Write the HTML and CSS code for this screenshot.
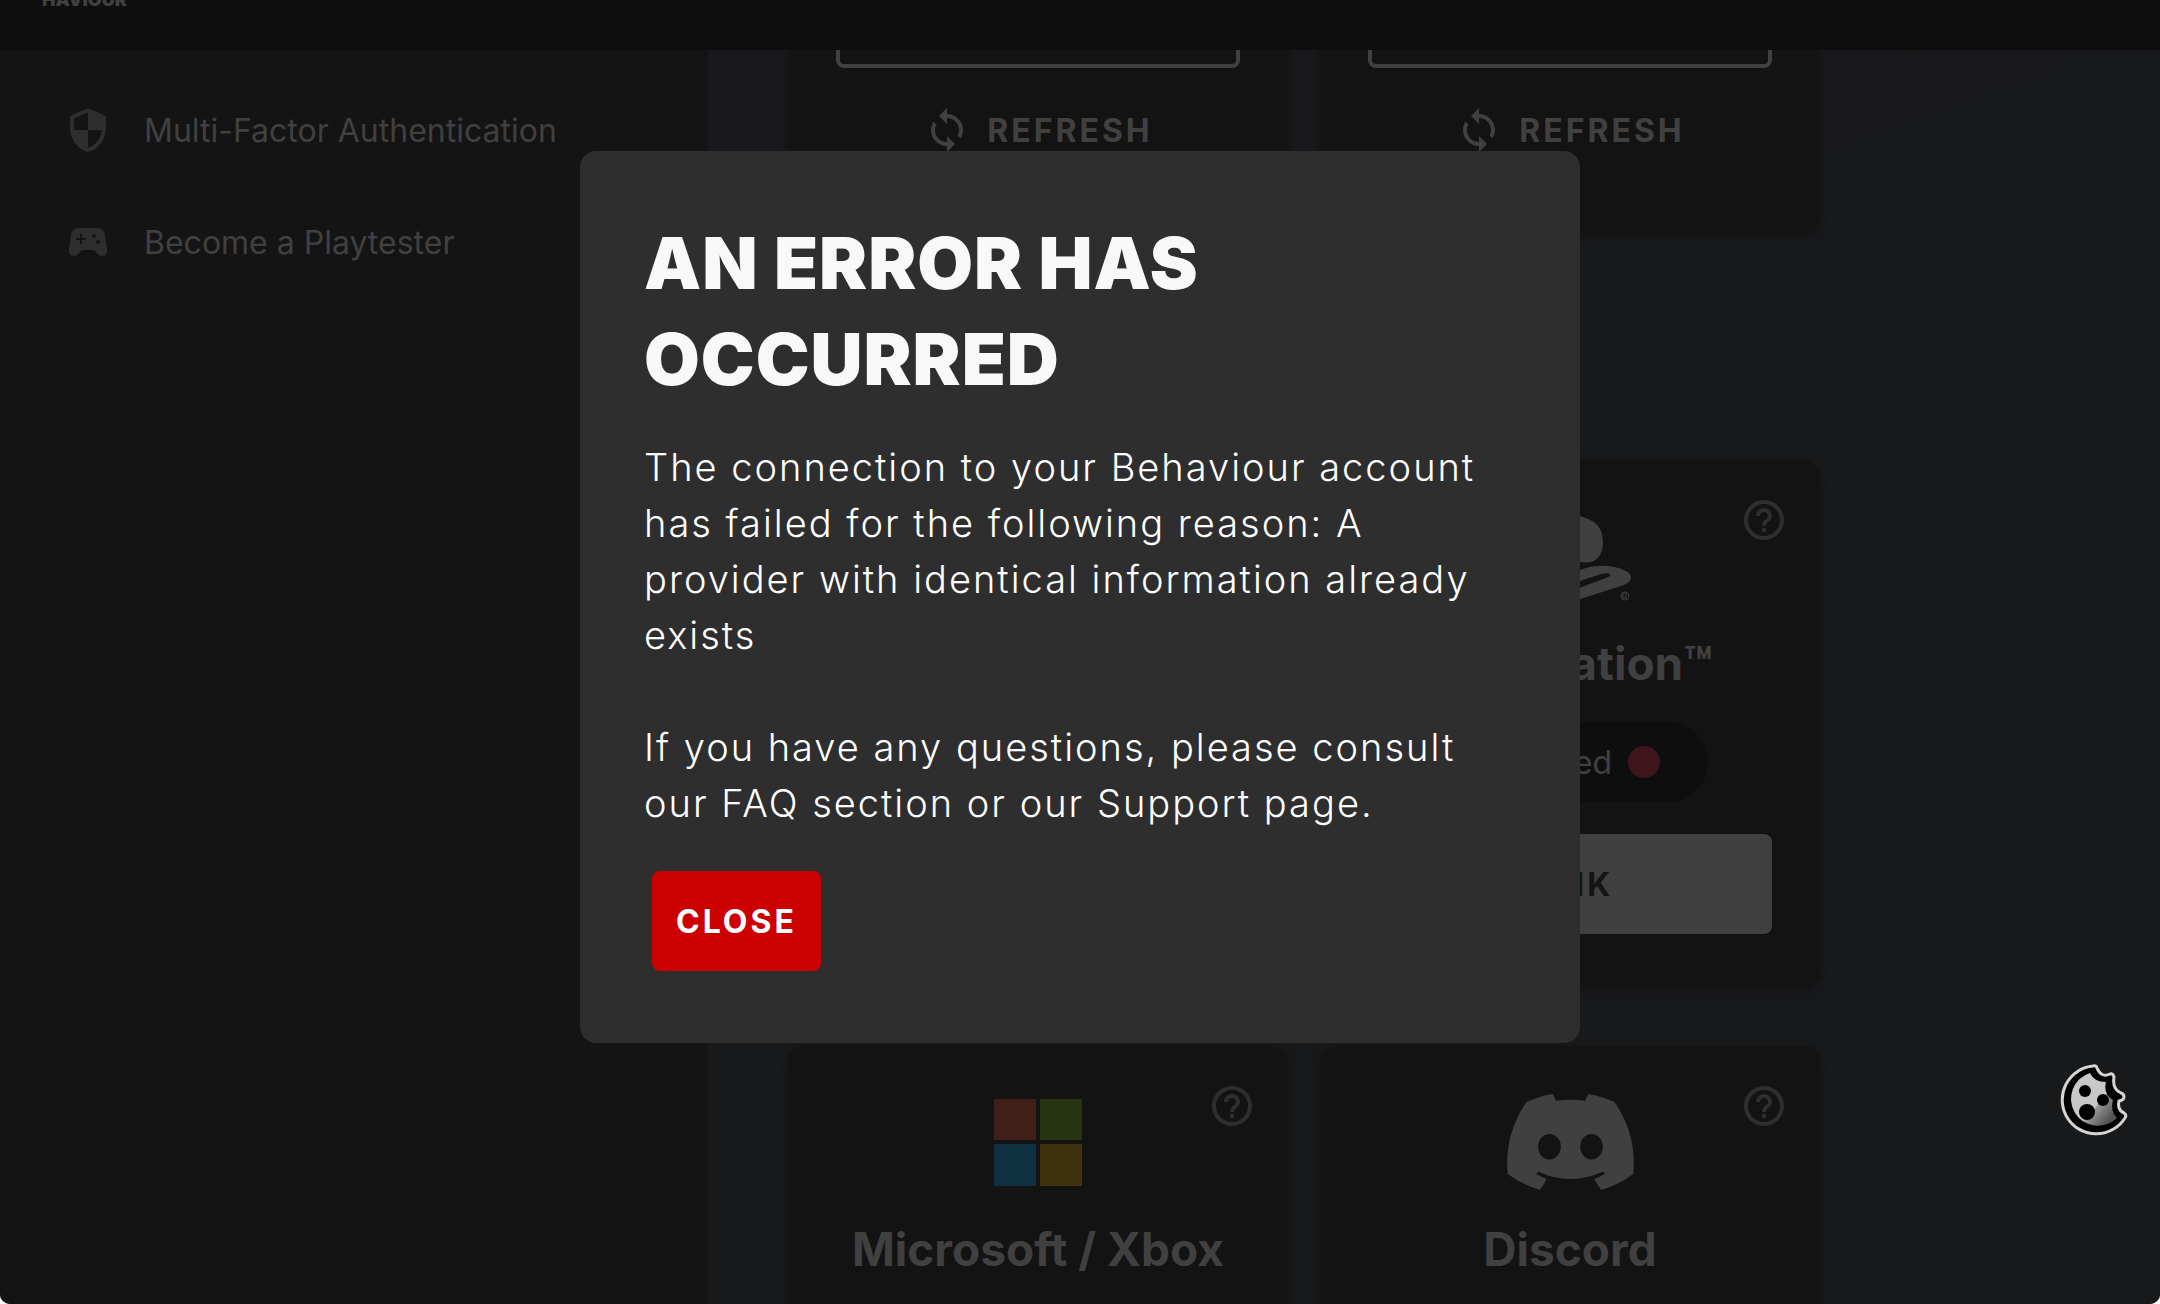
FILE: index.html
```html
<!DOCTYPE html>
<html lang="en">
<head>
<meta charset="utf-8">
<title>Behaviour Account</title>
<meta name="viewport" content="width=device-width, initial-scale=1">
<link rel="stylesheet" href="styles.css">
</head>
<body>
<svg class="sprite" aria-hidden="true">
  <symbol id="sync" viewBox="0 0 24 24"><path d="M12 4V1L8 5l4 4V6c3.31 0 6 2.69 6 6 0 1.01-.25 1.97-.7 2.8l1.46 1.46C19.54 15.03 20 13.57 20 12c0-4.42-3.58-8-8-8zm0 14c-3.31 0-6-2.69-6-6 0-1.01.25-1.97.7-2.8L5.24 7.74C4.46 8.97 4 10.43 4 12c0 4.42 3.58 8 8 8v3l4-4-4-4v3z"/></symbol>
  <symbol id="help" viewBox="0 0 24 24"><path d="M11 18h2v-2h-2v2zm1-16C6.48 2 2 6.48 2 12s4.48 10 10 10 10-4.480 10-10S17.520 2 12 2zm0 18c-4.410 0-8-3.590-8-8s3.590-8 8-8 8 3.590 8 8-3.590 8-8 8zm0-14c-2.210 0-4 1.790-4 4h2c0-1.100.9-2 2-2s2 .9 2 2c0 2-3 1.750-3 5h2c0-2.250 3-2.500 3-5 0-2.210-1.790-4-4-4z"/></symbol>
</svg>
<div class="page">
  <header class="topbar"><a class="brand" href="#">HAVIOUR</a></header>
  <div class="layout">
    <nav class="sidebar" aria-label="Account">
      <a class="nav-link" href="#">
        <svg class="icon" viewBox="0 0 24 24" aria-hidden="true"><path d="M12 1L3 5v6c0 5.550 3.840 10.740 9 12 5.160-1.260 9-6.450 9-12V5l-9-4zm0 10.990h7c-.53 4.120-3.280 7.790-7 8.940V12H5V6.300l7-3.110v8.800z"/></svg>
        Multi-Factor Authentication
      </a>
      <a class="nav-link" href="#">
        <svg class="icon" viewBox="0 0 24 24" aria-hidden="true"><path d="M21.580 16.090l-1.090-7.660C20.210 6.460 18.520 5 16.530 5H7.470C5.480 5 3.790 6.460 3.510 8.430l-1.090 7.660C2.200 17.630 3.390 19 4.940 19c.68 0 1.320-.27 1.800-.75L9 16h6l2.250 2.250c.48.48 1.130.75 1.800.75 1.560 0 2.750-1.370 2.530-2.910zM11 11H9v2H8v-2H6v-1h2V8h1v2h2v1zm4-1c-.55 0-1-.45-1-1s.45-1 1-1 1 .45 1 1-.45 1-1 1zm2 3c-.55 0-1-.45-1-1s.45-1 1-1 1 .45 1 1-.45 1-1 1z"/></svg>
        Become a Playtester
      </a>
    </nav>
    <main class="content">
      <section class="grid grid-linked">
        <article class="card">
          <button class="btn btn-outline" type="button" aria-label="Unlink"></button>
          <button class="btn btn-text" type="button"><svg class="icon" aria-hidden="true"><use href="#sync"/></svg>REFRESH</button>
        </article>
        <article class="card">
          <button class="btn btn-outline" type="button" aria-label="Unlink"></button>
          <button class="btn btn-text" type="button"><svg class="icon" aria-hidden="true"><use href="#sync"/></svg>REFRESH</button>
        </article>
      </section>
      <section class="grid">
        <article class="card card-second">
          <button class="help" type="button" aria-label="Help"><svg class="icon" aria-hidden="true"><use href="#help"/></svg></button>
          <svg class="logo" width="124" height="96" viewBox="0 0 124 96" aria-hidden="true">
            <path d="M43 5v83l18 6V24c0-3 1-4 3-3s4 3 4 7v24c12 6 27 2 27-18C95 18 86 12 71 8 62 6 51 5 43 5z"/>
            <path fill-rule="evenodd" d="M66 64l12-4c16-4 30-2 40 3 7 4 7 10-2 14L66 93V82l32-12c8-3 4-6-5-4L66 75z"/>
            <path d="M40 57L10 68c-8 3-9 9-1 12 10 3 22 4 31 0V71l-11 4c-7 2-10-1-4-3l15-6z"/>
            <circle cx="117" cy="88" r="4" fill="none" stroke="currentColor"/>
            <path d="M115 91v-5h3q2 1 0 3h-2l3 2" fill="none" stroke="currentColor"/>
          </svg>
          <h2 class="card-title">PlayStation™</h2>
          <p class="status">Unlinked<span class="dot"></span></p>
          <button class="btn btn-solid" type="button">LINK</button>
        </article>
        <article class="card">
          <button class="help" type="button" aria-label="Help"><svg class="icon" aria-hidden="true"><use href="#help"/></svg></button>
          <svg class="logo" width="88" height="96" viewBox="0 0 88 96" aria-hidden="true"><path fill="#3f1f17" d="M0 5h42v41H0z"/><path fill="#283411" d="M46 5h42v41H46z"/><path fill="#0f3040" d="M0 50h42v42H0z"/><path fill="#40320f" d="M46 50h42v42H46z"/></svg>
          <h2 class="card-title">Microsoft / Xbox</h2>
        </article>
        <article class="card">
          <button class="help" type="button" aria-label="Help"><svg class="icon" aria-hidden="true"><use href="#help"/></svg></button>
          <svg class="logo" width="127" height="96" viewBox="0 0 127.14 96.36" aria-hidden="true"><path d="M107.700 8.070A105.150 105.150 0 0 0 81.470 0a72.060 72.060 0 0 0-3.360 6.830 97.680 97.680 0 0 0-29.110 0A72.370 72.370 0 0 0 45.640 0a105.890 105.890 0 0 0-26.250 8.090C2.790 32.650-1.710 56.600.54 80.210a105.730 105.730 0 0 0 32.170 16.150 77.700 77.700 0 0 0 6.890-11.110 68.420 68.420 0 0 1-10.850-5.180c.91-.66 1.800-1.340 2.660-2a75.570 75.570 0 0 0 64.320 0c.87.71 1.760 1.390 2.660 2a68.680 68.680 0 0 1-10.870 5.190 77 77 0 0 0 6.890 11.100 105.250 105.250 0 0 0 32.190-16.140c2.640-27.380-4.510-51.110-18.900-72.150zM42.450 65.690C36.180 65.690 31 60 31 53s5-12.740 11.430-12.740S54 46 53.890 53s-5.050 12.690-11.440 12.690zm42.240 0C78.410 65.690 73.250 60 73.250 53s5-12.740 11.440-12.740S96.230 46 96.120 53s-5.040 12.690-11.430 12.690z"/></svg>
          <h2 class="card-title">Discord</h2>
        </article>
      </section>
    </main>
  </div>
</div>
<div class="overlay">
  <div class="dialog" role="dialog" aria-modal="true" aria-labelledby="dialog-title">
    <h1 class="dialog-title" id="dialog-title">AN ERROR HAS OCCURRED</h1>
    <p class="dialog-text">The connection to your Behaviour account has failed for the following reason: A provider with identical information already exists</p>
    <p class="dialog-text">If you have any questions, please consult our FAQ section or our Support page.</p>
    <button class="btn btn-close" type="button">CLOSE</button>
  </div>
</div>
<button class="cookie" type="button" aria-label="Cookie settings">
  <svg width="68" height="72" viewBox="0 0 68 72" aria-hidden="true">
    <defs><linearGradient id="crust" x1="0" y1="0" x2="1" y2="1"><stop offset=".58" stop-color="#c8c8c8"/><stop offset=".6" stop-color="#999"/><stop offset=".85" stop-color="#555"/></linearGradient></defs>
    <path d="M33 2A34 34 0 1 0 65 54Q67 51 64 49Q57 46 59 37Q64 36 64 33Q64 30 61 29Q52 25 54 13Q53 9 50 10Q41 14 37 4Q36 1 33 2z" fill="#000" stroke="#d4d4d4" stroke-width="3"/>
    <path d="M30 9A27 27 0 1 0 57 54Q50 47 53 36Q43 30 46 18Q34 18 30 9z" fill="url(#crust)"/>
    <circle cx="25" cy="27" r="6"/><circle cx="43" cy="36" r="6"/><circle cx="27" cy="48" r="8"/>
  </svg>
</button>
</body>
</html>
```
FILE: styles.css
```css
* { box-sizing: border-box; }

html { background: #fff; }

body {
  margin: 0;
  font-family: Inter, "Liberation Sans", sans-serif;
  font-size: 32px;
  color: #404040;
}

h1, h2, p { margin: 0; }

a { color: inherit; text-decoration: none; }

button {
  font: inherit;
  color: inherit;
  background: none;
  border: 0;
  padding: 0;
  cursor: pointer;
}

svg { fill: currentColor; }

.sprite { position: absolute; width: 0; height: 0; }

.icon { width: 48px; height: 48px; flex: none; }

.page {
  height: 100vh;
  display: flex;
  flex-direction: column;
  overflow: hidden;
  border-radius: 0 0 10px 10px;
  background: #18191b;
}

.topbar {
  height: 50px;
  flex: none;
  padding-left: 42px;
  display: flex;
  align-items: flex-start;
  background: #0e0e0e;
}

/* the logo is scrolled half out of view */
.brand {
  margin-top: -10px;
  font-size: 18px;
  line-height: 20px;
  font-weight: 900;
}

.layout {
  flex: 1;
  min-height: 0;
  display: flex;
  overflow: hidden;
}

.sidebar {
  width: 708px;
  flex: none;
  padding: 24px 64px;
  background: #141414;
}

.nav-link {
  height: 112px;
  display: flex;
  align-items: center;
  gap: 32px;
}

.nav-link .icon { color: #2e2e2e; }

.content {
  flex: 1;
  padding: 0 80px;
  background: linear-gradient(160deg, #19191d, #18191b 40%, #17191b);
}

.grid {
  display: grid;
  grid-template-columns: repeat(2, 500px);
  column-gap: 32px;
  row-gap: 60px;
}

/* linked accounts are scrolled under the top bar */
.grid-linked { margin: -130px 0 228px; }

.card {
  position: relative;
  display: flex;
  flex-direction: column;
  align-items: center;
  padding: 48px 48px 52px;
  border-radius: 16px;
  background: #131314;
  box-shadow: 0 4px 8px #141415;
}

.card-second { grid-column: 2; }

.help {
  position: absolute;
  top: 36px;
  right: 32px;
  height: 48px;
  color: #2e2e2e;
}

.logo { height: 96px; }

.card-title {
  margin: 27px 0 27px;
  font-size: 46px;
  line-height: 64px;
  font-weight: 700;
}

.status {
  height: 80px;
  padding: 0 48px;
  display: flex;
  align-items: center;
  gap: 16px;
  border-radius: 40px;
  background: #0e0e0e;
}

.dot {
  width: 32px;
  height: 32px;
  border-radius: 50%;
  background: #40161e;
}

.btn {
  height: 100px;
  display: flex;
  align-items: center;
  justify-content: center;
  gap: 16px;
  border-radius: 8px;
  font-weight: 700;
  letter-spacing: 3px;
}

.btn-outline { width: 100%; border: 4px solid #404040; }

.btn-text { margin-top: 12px; }

.btn-solid {
  width: 100%;
  margin-top: 32px;
  background: #404040;
  color: #141414;
}

.overlay {
  position: fixed;
  inset: 0;
  display: flex;
  align-items: center;
  justify-content: center;
  padding-bottom: 110px;
}

.dialog {
  width: 1000px;
  padding: 64px;
  border-radius: 16px;
  background: #2e2e2e;
  color: #fff;
}

.dialog-title {
  margin-bottom: 32px;
  font-size: 72px;
  line-height: 96px;
  font-weight: 900;
  letter-spacing: 1px;
  color: #f8f8f8;
}

.dialog-text {
  font-size: 38px;
  line-height: 56px;
  font-weight: 300;
  letter-spacing: 2px;
}

.dialog-text + .dialog-text { margin-top: 56px; }

.btn-close {
  margin: 40px 8px 8px;
  padding: 0 24px;
  background: #c00;
}

.cookie {
  position: fixed;
  right: 32px;
  bottom: 168px;
  height: 72px;
  color: #000;
}
```
